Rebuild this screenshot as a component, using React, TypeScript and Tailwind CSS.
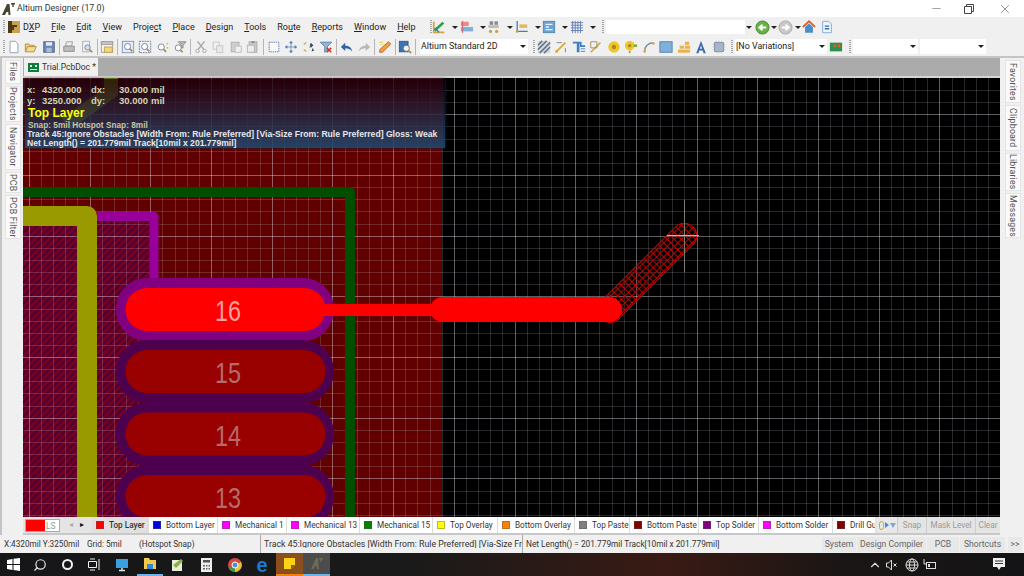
import type { ReactNode } from 'react';
import { ChevronUp, Minus, Search, X } from 'lucide-react';

const icons: Record<string, ReactNode> = {
  new: <path d="M3.5 1.5h6l3 3v10h-9z" fill="#fff" stroke="#8a9bb0" />,
  open: (
    <>
      <path d="M1.5 13.5v-9h4l1 1.5h5v2" fill="#f2d27a" stroke="#b08a3c" />
      <path d="M1.5 13.5l2.5-6h10l-2.5 6z" fill="#f5d98c" stroke="#b08a3c" />
    </>
  ),
  save: (
    <>
      <rect x="2" y="2" width="12" height="12" fill="#6f86b5" stroke="#4c5f8a" />
      <rect x="4.5" y="2.5" width="7" height="4" fill="#e4e9f2" />
      <rect x="5" y="9" width="6" height="5" fill="#aebbd4" />
    </>
  ),
  print: (
    <>
      <path d="M4 7l1-5h7l-1 5z" fill="#eee" stroke="#9a9a9a" />
      <path d="M2 7h12v6H2z" fill="#bcbcbc" stroke="#8c8c8c" />
    </>
  ),
  preview: (
    <>
      <path d="M3 1.5h8v12H3z" fill="#f4f4f4" stroke="#a9a9a9" />
      <circle cx="8.5" cy="8.5" r="3" fill="#cfe0ef" stroke="#6a86a6" />
      <path d="M11 11l3 3" stroke="#a88b55" strokeWidth="2" />
    </>
  ),
  folder: (
    <>
      <rect x="1.5" y="2" width="13" height="12" fill="#f3f3f3" stroke="#9a9a9a" />
      <rect x="1.5" y="2" width="13" height="3" fill="#c9c9c9" stroke="#9a9a9a" />
      <rect x="5" y="8" width="9" height="6" fill="#f4d77c" stroke="#c2a043" />
    </>
  ),
  zoomA: (
    <>
      <rect x="1.5" y="1.5" width="13" height="13" fill="#e4edf6" stroke="#7c93b0" />
      <circle cx="7.5" cy="7.5" r="3.5" fill="#fff" stroke="#5f7ea3" />
      <path d="M10 10l3 3" stroke="#a88b55" strokeWidth="2" />
    </>
  ),
  zoomB: (
    <>
      <rect x="1.5" y="1.5" width="13" height="13" fill="#eef1f5" stroke="#66718a" strokeDasharray="2 1" />
      <circle cx="7.5" cy="7.5" r="3.5" fill="#fff" stroke="#5f7ea3" />
      <path d="M10 10l3 3" stroke="#a88b55" strokeWidth="2" />
    </>
  ),
  zoomC: (
    <>
      <circle cx="6" cy="8" r="3.5" fill="#fff" stroke="#6f8099" />
      <path d="M8.5 10.5l3 3" stroke="#a88b55" strokeWidth="2" />
      <path d="M12 3h2v2h-2zM12 8h2v2h-2z" fill="#d9c24f" />
    </>
  ),
  zoomD: (
    <>
      <path d="M6 2h9l-3.5 4v3h-2V6z" fill="#b9b9b9" stroke="#8a8a8a" />
      <circle cx="6" cy="9" r="3.5" fill="#fff" stroke="#6f8099" />
      <path d="M8.5 11.5l2.5 2.5" stroke="#a88b55" strokeWidth="2" />
    </>
  ),
  cut: (
    <>
      <path d="M4 1.5l7 9M12 1.5l-7 9" stroke="#a5a5a5" strokeWidth="1.5" fill="none" />
      <circle cx="4" cy="12.5" r="2" fill="none" stroke="#a5a5a5" />
      <circle cx="12" cy="12.5" r="2" fill="none" stroke="#a5a5a5" />
    </>
  ),
  copy: (
    <>
      <rect x="2.5" y="2.5" width="7" height="8" fill="#f3f3f3" stroke="#c3c3c3" />
      <rect x="6.5" y="6.5" width="7" height="8" fill="#e9e9e9" stroke="#c3c3c3" />
    </>
  ),
  paste: (
    <>
      <rect x="2.5" y="2.5" width="9" height="11" fill="#cfcfcf" stroke="#adadad" />
      <rect x="7" y="7" width="7" height="7" fill="#f0f0f0" stroke="#bdbdbd" />
    </>
  ),
  paste2: (
    <>
      <rect x="3.5" y="2" width="9" height="12" fill="#c9c9c9" stroke="#a9a9a9" />
      <rect x="1.5" y="6" width="8" height="8" fill="#ececec" stroke="#b3b3b3" />
      <rect x="6" y="1.5" width="4" height="2" fill="#8f8f8f" />
    </>
  ),
  select: <rect x="2.5" y="2.5" width="11" height="11" fill="#fff" fillOpacity=".5" stroke="#4a6aa5" strokeDasharray="1.5 1" />,
  move: <path d="M8 2v12M2 8h12M8 1.5L6.5 3.5h3zM8 14.5l-1.5-2h3zM1.5 8l2-1.5v3zM14.5 8l-2-1.5v3z" stroke="#4f7aae" fill="#4f7aae" strokeWidth=".8" />,
  deselect: (
    <>
      <path d="M2 5l3-2M2 11l3 2M8 8h1" stroke="#c9b557" strokeWidth="1.5" fill="none" />
      <path d="M10 3l3 3-3 3-1-3zM12 9l2 3-3 1z" fill="#3c4a66" />
    </>
  ),
  filter: (
    <>
      <path d="M1.5 2.5h13l-5 5v5l-3 1.5v-6.5z" fill="#8fb5d9" stroke="#597ea3" />
      <path d="M9 9l5 5M14 9l-5 5" stroke="#d0342c" strokeWidth="1.7" />
    </>
  ),
  undo: <path d="M14 13C13 8 10 6.5 6 6.5V3L1 8l5 4.5V9.5c3 0 6 1 8 3.5z" fill="#2f62a6" />,
  redo: <path d="M2 13c1-5 4-6.5 8-6.5V3l5 5-5 4.5V9.5c-3 0-6 1-8 3.5z" fill="#b8b8b8" />,
  pencil: (
    <>
      <path d="M12 2l2.5 2.5L5 14H2v-3z" fill="#f0a13a" stroke="#c9562b" />
      <path d="M1 2h5v1H1zM2 5h6v1H2z" fill="#e6d04a" />
    </>
  ),
  books: (
    <>
      <rect x="1.5" y="1.5" width="10" height="12" fill="#3c74b4" stroke="#2d5a8f" />
      <circle cx="9.5" cy="9.5" r="3.5" fill="#f5f5f5" stroke="#6c6c6c" />
      <path d="M12 12l3 3" stroke="#b08a3c" strokeWidth="2" />
    </>
  ),
  route: (
    <>
      <path d="M2 2v12h12" stroke="#d2a63c" strokeWidth="2" fill="none" />
      <path d="M3 12L13 3" stroke="#2f9b46" strokeWidth="3" />
      <path d="M3 9l5 5" stroke="#2f7bb5" strokeWidth="1.5" />
    </>
  ),
  align: (
    <>
      <rect x="1" y="2" width="9" height="5" fill="#e98a8a" />
      <rect x="1" y="8" width="14" height="5" fill="#7fb1dc" />
      <path d="M3 1v14" stroke="#d05a5a" />
    </>
  ),
  parts: (
    <>
      <rect x="3" y="1.5" width="4" height="4" fill="#8a8a8a" />
      <rect x="8.5" y="1.5" width="4" height="4" fill="#8a8a8a" />
      <rect x="1.5" y="6" width="12" height="3" fill="#b8b8b8" />
      <circle cx="4" cy="13" r="1.8" fill="#c8a13c" />
      <circle cx="11" cy="13" r="1.8" fill="#c8a13c" />
    </>
  ),
  trace: (
    <>
      <path d="M2.5 1v12h12" stroke="#3f7fbf" strokeWidth="1.5" fill="none" />
      <rect x="5" y="5" width="9" height="4" fill="#e3b760" />
      <circle cx="2.5" cy="13" r="1.5" fill="#c8a13c" />
    </>
  ),
  sheet: (
    <>
      <rect x="1.5" y="1.5" width="13" height="13" fill="#6aa2d2" stroke="#4e84b5" />
      <path d="M4 5h8M4 11h8M4 8h4" stroke="#e8f1f8" strokeWidth="1.5" />
    </>
  ),
  grid: <path d="M1 3h14M1 6h14M1 9h14M1 12h14M3 1v14M6 1v14M9 1v14M12 1v14" stroke="#5f7bb3" />,
  back: (
    <>
      <circle cx="8" cy="8" r="7" fill="#6ab04a" stroke="#4d8a33" />
      <path d="M12 8H6M8 5L4.5 8 8 11" stroke="#fff" strokeWidth="2" fill="none" />
    </>
  ),
  forward: (
    <>
      <circle cx="8" cy="8" r="7" fill="#c9c9c9" stroke="#a9a9a9" />
      <path d="M4 8h6M8 5l3.5 3L8 11" stroke="#fff" strokeWidth="2" fill="none" />
    </>
  ),
  home: (
    <>
      <path d="M1 8l7-6.5L15 8" stroke="#d9622b" strokeWidth="2" fill="none" />
      <path d="M3.5 8v6.5h9V8L8 4z" fill="#4a8bc9" />
    </>
  ),
  doc: (
    <>
      <path d="M3 1.5h7l3 3v10H3z" fill="#eef4fb" stroke="#7fa5cf" />
      <path d="M5.5 7h5M5.5 10h5" stroke="#2f6fb5" strokeWidth="1.5" />
    </>
  ),
  hatch: (
    <>
      <rect x="1" y="1" width="14" height="14" fill="#d8d8d8" />
      <path d="M1 6l5-5M1 11L11 1M3 15L15 3M8 15l7-7" stroke="#5f7596" strokeWidth="1.7" />
    </>
  ),
  track1: (
    <>
      <path d="M3 13L13 3" stroke="#d9a93c" strokeWidth="2" />
      <path d="M3 3h6M13 9v5" stroke="#7d7d7d" />
      <rect x="1.5" y="11.5" width="3" height="3" fill="#d9a93c" />
    </>
  ),
  bus: (
    <>
      <path d="M1 3h9v4h5" stroke="#3f7fbf" strokeWidth="2" fill="none" />
      <path d="M7 3v11" stroke="#3f7fbf" strokeWidth="3" />
      <path d="M10 10h5M10 13h5" stroke="#3f7fbf" />
    </>
  ),
  track2: (
    <>
      <path d="M2 14L13 3" stroke="#d9a93c" strokeWidth="2" />
      <path d="M2 2h7v7H2z" stroke="#9a8a55" fill="none" />
    </>
  ),
  pad: (
    <>
      <circle cx="8" cy="8" r="6.5" fill="#eec52b" />
      <circle cx="8" cy="8" r="2.5" fill="#a98a1e" />
    </>
  ),
  via: (
    <>
      <circle cx="6.5" cy="6.5" r="5.5" fill="#eec52b" />
      <circle cx="6.5" cy="6.5" r="2" fill="#a98a1e" />
      <path d="M11 5h4v3h-4z" fill="#7fae3c" />
      <path d="M6.5 12v3" stroke="#c89c1e" strokeWidth="2" />
    </>
  ),
  arc: (
    <>
      <path d="M3 13A9 9 0 0 1 13 3.5" stroke="#7f8da3" strokeWidth="1.5" fill="none" />
      <circle cx="3" cy="13" r="1.5" fill="#d9a93c" />
      <circle cx="13" cy="4" r="1.5" fill="#d9a93c" />
    </>
  ),
  rect: <rect x="1" y="2" width="14" height="12" fill="#7fb1dc" stroke="#4e7ea8" />,
  bricks: (
    <>
      <rect x="9" y="2" width="5" height="3.5" fill="#e8b34a" />
      <rect x="3" y="6.5" width="5" height="3.5" fill="#e8b34a" />
      <rect x="9" y="6.5" width="6" height="3.5" fill="#e8b34a" />
      <rect x="1" y="11" width="14" height="3.5" fill="#e8b34a" />
    </>
  ),
  text: <path d="M8 1L2.5 15h2.500l1-3h4l1 3h2.500zM6.800 10L8 6l1.200 4z" fill="#3c67ad" />,
  chip: (
    <>
      <rect x="3" y="3" width="10" height="10" fill="#a6b6c9" stroke="#75879c" />
      <path d="M5 1v14M8 1v14M11 1v14M1 5h14M1 8h14M1 11h14" stroke="#a9b6c5" strokeDasharray="2 10" />
    </>
  ),
  board: (
    <>
      <rect x="1" y="3" width="14" height="10" fill="#2f8f50" />
      <path d="M5 5l3 3M8 5L5 8M10 5l3 3M13 5l-3 3" stroke="#d9622b" strokeWidth="1.3" />
    </>
  ),
};

function Ic({ name, size = 14 }: { name: string; size?: number }) {
  return (
    <svg width={size} height={size} viewBox="0 0 16 16" className="shrink-0">
      {icons[name]}
    </svg>
  );
}

function Btn({ name }: { name: string }) {
  return (
    <div className="flex h-full w-[17.5px] shrink-0 items-center justify-center">
      <Ic name={name} />
    </div>
  );
}

function Drop() {
  return <div className="h-0 w-0 shrink-0 border-x-[3px] border-t-[3px] border-x-transparent border-t-[#222]" />;
}

function Handle({ className = '' }: { className?: string }) {
  return <div className={`h-[14px] w-[2px] shrink-0 bg-[repeating-linear-gradient(#a5a5a5_0,#a5a5a5_1px,#f0f0f0_1px,#f0f0f0_2px)] ${className}`} />;
}

function Sep() {
  return <div className="mx-[1px] h-[16px] w-[1px] shrink-0 bg-[#b5b5b5]" />;
}

function IconDrop({ name }: { name: string }) {
  return (
    <div className="flex w-[27.5px] shrink-0 items-center gap-[6px]">
      <Ic name={name} />
      <Drop />
    </div>
  );
}

function Combo({ width, text = '' }: { width: string; text?: string }) {
  return (
    <div className={`flex h-[15px] shrink-0 items-center justify-between pr-[2px] ${width} bg-white`}>
      <span className="whitespace-nowrap pl-[1px] text-[8.9px] leading-none text-[#222]">{text}</span>
      <Drop />
    </div>
  );
}

const menus: [string, string, string][] = [
  ['D', 'X', 'P'],
  ['', 'F', 'ile'],
  ['', 'E', 'dit'],
  ['', 'V', 'iew'],
  ['Proje', 'c', 't'],
  ['', 'P', 'lace'],
  ['', 'D', 'esign'],
  ['', 'T', 'ools'],
  ['Ro', 'u', 'te'],
  ['', 'R', 'eports'],
  ['', 'W', 'indow'],
  ['', 'H', 'elp'],
];

const layers: [string, string, string][] = [
  ['Top Layer', '#ff0000', 'w-[56px]'],
  ['Bottom Layer', '#0000e0', 'w-[69px]'],
  ['Mechanical 1', '#ff00ff', 'w-[69px]'],
  ['Mechanical 13', '#ff00ff', 'w-[73px]'],
  ['Mechanical 15', '#008000', 'w-[73px]'],
  ['Top Overlay', '#ffff00', 'w-[65px]'],
  ['Bottom Overlay', '#ff8000', 'w-[77px]'],
  ['Top Paste', '#808080', 'w-[55px]'],
  ['Bottom Paste', '#800000', 'w-[69px]'],
  ['Top Solder', '#800080', 'w-[60px]'],
  ['Bottom Solder', '#ff00ff', 'w-[74px]'],
  ['Drill Guide', '#800000', 'w-[43px]'],
];

function VTab({ label, height }: { label: string; height: string }) {
  return (
    <div className={`flex w-[16px] items-center justify-center border border-[#e4e4e4] bg-[#fafafa] ${height}`}>
      <span className="whitespace-nowrap text-[8.8px] leading-none tracking-[0.2px] text-[#555] [writing-mode:vertical-rl]">{label}</span>
    </div>
  );
}

function PcbCanvas() {
  const vs = Array.from({ length: 81 }, (_, i) => 28.9 + i * 12.14);
  const hs = Array.from({ length: 43 }, (_, i) => 5 + i * 12.14).filter((y) => y > 78);
  const pads = [
    { y: 278, label: '16', ring: '#800080', fill: '#ff0000', text: '#ff9c9c' },
    { y: 340, label: '15', ring: '#4d004d', fill: '#990000', text: '#b86a6a' },
    { y: 402.5, label: '14', ring: '#4d004d', fill: '#990000', text: '#b86a6a' },
    { y: 465, label: '13', ring: '#4d004d', fill: '#990000', text: '#b86a6a' },
  ];
  return (
    <svg viewBox="23 78 977 439" width="977" height="439" className="block">
      <defs>
        <pattern id="hatch" width="5" height="5" patternUnits="userSpaceOnUse" patternTransform="rotate(45)">
          <rect width="5" height="5" fill="#760020" />
          <rect width="2" height="5" fill="#4a0034" />
        </pattern>
        <pattern id="mesh" width="5" height="5" patternUnits="userSpaceOnUse">
          <path d="M0 0.5H5M0.5 0V5" stroke="#c40000" />
        </pattern>
      </defs>
      <rect x="23" y="78" width="977" height="439" fill="#000" />
      <rect x="23" y="78" width="419" height="439" fill="#600000" />
      <rect x="23" y="222" width="127" height="295" fill="url(#hatch)" />
      <rect x="138" y="340" width="200" height="177" fill="#600000" />
      {vs.map((x, i) => (
        <line key={x} x1={Math.round(x) + 0.5} x2={Math.round(x) + 0.5} y1="78" y2="517" stroke="#e8e8f4" strokeOpacity={i % 5 === 0 ? 0.4 : 0.17} />
      ))}
      {hs.map((y) => (
        <line key={y} y1={Math.round(y) + 0.5} y2={Math.round(y) + 0.5} x1="23" x2="1000" stroke="#e8e8f4" strokeOpacity={Math.round((y - 114.3) / 12.14) % 5 === 0 ? 0.4 : 0.17} />
      ))}
      <path d="M111 78V92L66 124" stroke="#999900" strokeWidth="14" fill="none" />
      <path d="M23 192H350V517" stroke="#004f00" strokeWidth="10" fill="none" strokeLinejoin="round" />
      <path d="M23 216H87V517" stroke="#999900" strokeWidth="20" fill="none" strokeLinejoin="round" />
      <path d="M97 216.5H154V285" stroke="#990099" strokeWidth="9" fill="none" strokeLinejoin="round" />
      {pads.map((p) => (
        <rect key={p.label} x="116" y={p.y} width="218" height="63" rx="31" fill={p.ring} />
      ))}
      {pads.map((p) => (
        <g key={p.label}>
          <rect x="125.5" y={p.y + 10} width="200" height="43" rx="21.5" fill={p.fill} />
          <text x="215" y={p.y + 43} fontSize="30" fontFamily="Liberation Sans" fill={p.text} textLength="26" lengthAdjust="spacingAndGlyphs">
            {p.label}
          </text>
        </g>
      ))}
      <rect x="322" y="304" width="120" height="12" fill="#ff0000" />
      <rect x="597.5" y="297.5" width="130" height="25" rx="12.5" fill="url(#mesh)" stroke="#c80000" transform="rotate(-45 610 310)" />
      <rect x="430" y="297" width="192" height="25" rx="12.5" fill="#ff0000" />
      <path d="M684.5 200V272" stroke="#7c7c72" />
      <path d="M667 235.5H699" stroke="#b8b8b8" />
    </svg>
  );
}

function Readout() {
  return (
    <div className="absolute left-[2px] top-[1px] flex h-[69px] w-[420px] flex-col bg-gradient-to-b from-[#14000ac8] to-[#1d4a70e0] pl-[2px] pt-[5px] font-['Liberation_Sans',sans-serif] font-bold shadow-[0_0_3px_#0f2c45]">
      <div className="grid grid-cols-[15px_49px_27px_33px_auto] text-[9.5px] leading-[11px] text-[#d5d5ae]">
        <span>x:</span>
        <span>4320.000</span>
        <span>dx:</span>
        <span className="pr-[3px] text-right">30.000</span>
        <span>mil</span>
        <span>y:</span>
        <span>3250.000</span>
        <span>dy:</span>
        <span className="pr-[3px] text-right">30.000</span>
        <span>mil</span>
      </div>
      <div className="ml-[1px] text-[12px] leading-[14px] text-[#ffff00]">Top Layer</div>
      <div className="ml-[1px] pt-[1px] text-[8.3px] leading-[9px] text-[#c6c6a4]">Snap: 5mil Hotspot Snap: 8mil</div>
      <div className="whitespace-nowrap text-[8.6px] leading-[9px] text-[#e8e8e8]">
        Track 45:Ignore Obstacles [Width From: Rule Preferred] [Via-Size From: Rule Preferred] Gloss: Weak
      </div>
      <div className="whitespace-nowrap text-[8.6px] leading-[9px] text-[#e8e8e8]">Net Length() = 201.779mil Track[10mil x 201.779mil]</div>
    </div>
  );
}

function Taskbar() {
  return (
    <div className="flex h-[23px] shrink-0 items-center bg-[linear-gradient(90deg,#161618_0%,#1a1a1a_40%,#3a1a14_65%,#1a1615_82%,#141416_100%)]">
      <div className="flex w-[27px] justify-center">
        <svg width="13" height="13" viewBox="0 0 13 13">
          <path d="M0 2l5.5-1v5H0zM6.5 .8L13 0v6H6.5zM0 7h5.5v5L0 11zM6.5 7H13v6l-6.5-.9z" fill="#fff" />
        </svg>
      </div>
      <div className="flex w-[26px] justify-center">
        <Search size={14} color="#e8e8e8" className="-scale-x-100" />
      </div>
      <div className="flex w-[28px] justify-center">
        <div className="h-[11px] w-[11px] rounded-full border-[2px] border-[#f0f0f0]" />
      </div>
      <div className="flex w-[26px] justify-center">
        <svg width="13" height="13" viewBox="0 0 13 13">
          <path d="M.5 3.5h8v6h-8zM2 1h5M2 12h5M11 1v11" stroke="#eee" fill="none" />
        </svg>
      </div>
      <div className="flex h-full w-[30px] items-center justify-center">
        <svg width="14" height="14" viewBox="0 0 14 14">
          <rect x="1" y="1" width="12" height="9" fill="#38a0e0" />
          <path d="M4 12.5h6M7 10v2" stroke="#d8e8f0" strokeWidth="1.5" />
        </svg>
      </div>
      <div className="flex h-full w-[26px] items-center justify-center border-b-[2px] border-[#6db3e8]">
        <svg width="14" height="13" viewBox="0 0 14 13">
          <path d="M1 1h5l1 2h6v9H1z" fill="#f4c84a" />
          <rect x="4" y="7" width="6" height="5" fill="#2f8ad0" />
        </svg>
      </div>
      <div className="flex w-[28px] justify-center">
        <svg width="14" height="14" viewBox="0 0 14 14">
          <rect x="2" y="2" width="10" height="11" fill="#e8edd8" />
          <path d="M3 7l8-6 2 2-7 7z" fill="#8eb04c" />
        </svg>
      </div>
      <div className="flex w-[30px] justify-center">
        <svg width="11" height="14" viewBox="0 0 11 14">
          <rect width="11" height="14" fill="#ededed" />
          <rect x="2" y="2" width="7" height="2.5" fill="#555" />
          <path d="M2 7h2v1.5H2zM5 7h1.5v1.5H5zM7.5 7H9v1.5H7.5zM2 10h2v1.5H2zM5 10h1.5v1.5H5zM7.5 10H9v1.5H7.5z" fill="#666" />
        </svg>
      </div>
      <div className="flex w-[27px] justify-center">
        <svg width="14" height="14" viewBox="0 0 14 14">
          <circle cx="7" cy="7" r="7" fill="#d8483a" />
          <path d="M7 7L1 11a7 7 0 0 0 6 3z" fill="#3a9b4a" />
          <path d="M7 7l6-3a7 7 0 0 1-6 10z" fill="#e9c23a" />
          <circle cx="7" cy="7" r="3" fill="#4a8ee0" stroke="#fff" />
        </svg>
      </div>
      <div className="flex w-[28px] justify-center">
        <span className="font-['Liberation_Sans',sans-serif] text-[20px] font-bold leading-[20px] text-[#1a78d4]">e</span>
      </div>
      <div className="flex h-full w-[27px] items-center justify-center border-b-[2px] border-[#f08010] bg-[#8a4f1c]">
        <svg width="11" height="11" viewBox="0 0 11 11">
          <path d="M0 0h11v7l-4 4H0z" fill="#fcd116" />
          <path d="M7 7h4l-4 4z" fill="#7a6210" />
        </svg>
      </div>
      <div className="flex h-full w-[27px] items-center justify-center border-b-[2px] border-[#6db3e8] bg-[#4c4c4c]">
        <svg width="12" height="11" viewBox="0 0 12 11">
          <path d="M0 11L5 0h2l1 11H6l-.3-3H4l-1.3 3zM8 0h4v1.5h-1.3V4H9.3V1.5H8z" fill="#6f6a50" />
        </svg>
      </div>
      <div className="ml-auto flex items-center">
        <ChevronUp size={14} color="#ddd" className="mr-[4px]" />
        <svg width="12" height="12" viewBox="0 0 12 12" className="mr-[7px]">
          <path d="M.5 4h2l3-3v10l-3-3h-2zM7.5 4.5l3 3M10.5 4.5l-3 3" stroke="#ddd" fill="none" />
        </svg>
        <svg width="14" height="14" viewBox="0 0 14 14" className="mr-[4px]">
          <circle cx="7" cy="7" r="6" stroke="#ddd" fill="none" />
          <ellipse cx="7" cy="7" rx="2.5" ry="6" stroke="#ddd" fill="none" />
          <path d="M1 7h12M2 4h10M2 10h10" stroke="#ddd" />
        </svg>
        <svg width="13" height="11" viewBox="0 0 13 11" className="mr-[57px]">
          <rect x="3.5" y="3.5" width="9" height="6" stroke="#ddd" fill="none" />
          <path d="M1 0v5h2" stroke="#ddd" fill="none" />
          <rect x="5" y="5" width="2" height="3" fill="#ddd" />
        </svg>
        <svg width="12" height="13" viewBox="0 0 12 13" className="mr-[19px]">
          <path d="M0 0h12v9H8l-2 3-2-3H0z" fill="#f0f0f0" />
          <path d="M2 3h8M2 5.5h8" stroke="#333" />
        </svg>
      </div>
    </div>
  );
}

export default function App() {
  return (
    <div className="flex h-[576px] w-[1024px] flex-col overflow-hidden bg-[#f0f0f0] font-['Roboto',sans-serif] text-[#222]">
      {/* Title bar */}
      <div className="flex h-[17px] shrink-0 items-center bg-white">
        <svg width="13" height="12" viewBox="0 0 13 12" className="ml-[2px]">
          <path d="M0 12L5 1h2.5L8.5 12H6.5L6.2 9H4.5L3 12zM9 0h4v1.5h-1.3V4H10.3V1.5H9z" fill="#4a4530" />
        </svg>
        <span className="ml-[2px] text-[8.8px] leading-none text-[#333]">Altium Designer (17.0)</span>
        <div className="ml-auto flex items-center">
          <Minus size={13} color="#555" strokeWidth={1} className="mr-[21px]" />
          <svg width="10" height="10" viewBox="0 0 10 10" className="mr-[24px]">
            <path d="M.5 2.5h7v7h-7zM2.5 2.5v-2h7v7h-2" stroke="#444" fill="none" />
          </svg>
          <X size={14} color="#444" strokeWidth={1} className="mr-[12px]" />
        </div>
      </div>

      {/* Menu row */}
      <div className="flex h-[20px] shrink-0 items-center">
        <Handle className="ml-[3px]" />
        <svg width="12" height="12" viewBox="0 0 12 12" className="ml-[3px]">
          <rect width="12" height="12" fill="#c8a14a" />
          <rect width="4" height="12" fill="#4a3a1c" />
          <path d="M4 4h5v2H6v3H4z" fill="#4a3a1c" />
        </svg>
        <div className="ml-[3px] flex w-[405px] shrink-0 items-center gap-[11px] text-[9px] leading-none">
          {menus.map(([a, b, c]) => (
            <span key={a + b + c}>
              {a}
              <span className="underline">{b}</span>
              {c}
            </span>
          ))}
        </div>
        <Handle className="ml-[2px]" />
        <div className="flex items-center">
          {['route', 'align', 'parts', 'trace', 'sheet', 'grid'].map((n) => (
            <IconDrop key={n} name={n} />
          ))}
        </div>
        <Handle className="ml-[5px]" />
        <div className="ml-[2px] flex h-[14px] w-[139px] shrink-0 bg-white" />
        <div className="ml-[1px]">
          <Drop />
        </div>
        <div className="ml-[3px]">
          <Ic name="back" size={15} />
        </div>
        <div className="ml-[1px]">
          <Drop />
        </div>
        <div className="ml-[1px]">
          <Ic name="forward" size={15} />
        </div>
        <div className="ml-[1.5px]">
          <Drop />
        </div>
        <Btn name="home" />
        <Btn name="doc" />
      </div>

      {/* Toolbar row */}
      <div className="flex h-[19px] shrink-0 items-center">
        <Handle className="ml-[3px]" />
        <Btn name="new" />
        <Btn name="open" />
        <Btn name="save" />
        <Sep />
        <Btn name="print" />
        <Btn name="preview" />
        <Sep />
        <Btn name="folder" />
        <Sep />
        <Btn name="zoomA" />
        <Btn name="zoomB" />
        <Btn name="zoomC" />
        <Btn name="zoomD" />
        <Sep />
        <Btn name="cut" />
        <Btn name="copy" />
        <Btn name="paste" />
        <Btn name="paste2" />
        <Sep />
        <Btn name="select" />
        <Btn name="move" />
        <Btn name="deselect" />
        <Btn name="filter" />
        <Sep />
        <Btn name="undo" />
        <Btn name="redo" />
        <Sep />
        <Btn name="pencil" />
        <Sep />
        <Btn name="books" />
        <Sep />
        <div className="ml-[3px]">
          <Combo width="w-[108px]" text="Altium Standard 2D" />
        </div>
        <Handle className="ml-[5px]" />
        {['hatch', 'track1', 'bus', 'track2', 'pad', 'via', 'arc', 'rect', 'bricks', 'text', 'chip'].map((n) => (
          <Btn key={n} name={n} />
        ))}
        <Handle className="ml-[3.5px]" />
        <div className="ml-[2px]">
          <Combo width="w-[92px]" text="[No Variations]" />
        </div>
        <Btn name="board" />
        <Handle className="ml-[4.5px]" />
        <div className="ml-[2px]">
          <Combo width="w-[65px]" />
        </div>
        <div className="ml-[2px]">
          <Combo width="w-[66px]" />
        </div>
      </div>

      {/* Workspace */}
      <div className="flex min-h-0 flex-1 border-t-[2px] border-[#c4c4c4]">
        <div className="flex w-[23px] shrink-0 flex-col items-center gap-[2px] border-l-[2px] border-[#c4c4c4] pl-[1px] pt-[2px]">
          <VTab label="Files" height="h-[24px]" />
          <VTab label="Projects" height="h-[36px]" />
          <VTab label="Navigator" height="h-[46px]" />
          <VTab label="PCB" height="h-[21px]" />
          <VTab label="PCB Filter" height="h-[44px]" />
        </div>

        <div className="flex min-w-0 flex-1 flex-col">
          <div className="flex h-[18px] shrink-0 items-end bg-[#ababab] pl-[1px]">
            <div className="flex h-[18px] w-[74px] items-center gap-[3px] whitespace-nowrap bg-[#f0f0f0] pl-[4px]">
              <svg width="11" height="9" viewBox="0 0 11 9" className="shrink-0">
                <rect width="11" height="9" fill="#0f7a3c" />
                <path d="M2 2h2v2H2zM7 2h2v2H7zM2 6h7v1H2z" fill="#e8f0e0" />
              </svg>
              <span className="text-[8.5px] leading-none text-[#333]">Trial.PcbDoc *</span>
            </div>
          </div>
          <div className="h-[2px] shrink-0 bg-[#d4d4d4]" />
          <div className="relative h-[439px] shrink-0">
            <PcbCanvas />
            <Readout />
          </div>
          {/* Layer tabs */}
          <div className="flex h-[16px] shrink-0 items-center bg-[#e4e4e4] text-[8.2px] leading-none text-[#333]">
            <div className="ml-[2px] flex h-[13px] w-[35px] shrink-0 border border-[#aaa] bg-white">
              <div className="w-[19px] bg-[#ff0000]" />
              <span className="pl-[1px] pt-[1px] text-[8.5px] leading-[10px] text-[#999]">LS</span>
            </div>
            <div className="flex w-[32px] shrink-0 justify-center gap-[7px]">
              <span className="text-[8px] text-[#aaa]">◂</span>
              <span className="text-[8px] text-[#111]">▸</span>
            </div>
            <div className="flex h-full w-[785px] min-w-0 shrink-0 overflow-hidden">
              {layers.map(([name, color, width], i) => (
                <div key={name} className={`flex h-full shrink-0 items-center gap-[5px] overflow-hidden whitespace-nowrap pl-[4px] ${width} ${i === 0 ? 'bg-[#e0e0e0] font-medium' : 'border-l border-[#ddd] bg-white'}`}>
                  <div className="h-[8px] w-[8px] shrink-0 border border-[#555]/40" style={{ backgroundColor: color }} />
                  <span>{name}</span>
                </div>
              ))}
            </div>
            <div className="flex h-full w-[20px] shrink-0 items-center justify-center gap-[1px] bg-[#e8e8e8]">
              <div className="h-[9px] w-[5px] rounded-full border border-[#c9a93a]" />
              <div className="h-0 w-0 border-y-[3px] border-l-[4px] border-y-transparent border-l-[#3f8fd8]" />
              <div className="h-0 w-0 border-x-[3px] border-t-[5px] border-x-transparent border-t-[#7fa8d0]" />
            </div>
            <div className="flex h-full min-w-0 flex-1 items-center whitespace-nowrap bg-[#e4e4e4] text-[#9a9a9a]">
              <span className="flex h-full w-[29px] items-center justify-center border-l border-[#ccc]">Snap</span>
              <span className="flex h-full w-[49px] items-center justify-center border-l border-[#ccc]">Mask Level</span>
              <span className="flex h-full w-[25px] items-center justify-center border-l border-[#ccc]">Clear</span>
            </div>
          </div>
          <div className="h-[2px] shrink-0 bg-[#c8c8c8]" />
        </div>

        <div className="flex w-[24px] shrink-0 flex-col items-center gap-[2px] pl-[2px] pt-[2px]">
          <VTab label="Favorites" height="h-[43px]" />
          <VTab label="Clipboard" height="h-[46px]" />
          <VTab label="Libraries" height="h-[38px]" />
          <VTab label="Messages" height="h-[45px]" />
        </div>
      </div>

      {/* Status bar */}
      <div className="flex h-[18px] shrink-0 items-center text-[8.2px] leading-none text-[#333]">
        <span className="ml-[4px] w-[83px] shrink-0 whitespace-nowrap">X:4320mil Y:3250mil</span>
        <span className="w-[52px] shrink-0">Grid: 5mil</span>
        <span className="w-[121px] shrink-0">(Hotspot Snap)</span>
        <div className="h-full w-[1px] shrink-0 bg-[#aaa]" />
        <span className="ml-[3px] w-[258px] shrink-0 overflow-hidden whitespace-nowrap text-[8.75px]">Track 45:Ignore Obstacles [Width From: Rule Preferred] [Via-Size From: Rule Preferred]</span>
        <div className="h-full w-[1px] shrink-0 bg-[#aaa]" />
        <span className="ml-[3px] whitespace-nowrap text-[8.3px]">Net Length() = 201.779mil Track[10mil x 201.779mil]</span>
        <div className="ml-auto flex h-[15px] items-center gap-[1px] whitespace-nowrap pr-[2px] text-[8.6px] text-[#666]">
          <span className="flex h-full w-[34px] items-center justify-center bg-[#e8e8e8]">System</span>
          <span className="flex h-full w-[69px] items-center justify-center bg-[#e8e8e8]">Design Compiler</span>
          <span className="flex h-full w-[32px] items-center justify-center bg-[#e8e8e8]">PCB</span>
          <span className="flex h-full w-[45px] items-center justify-center bg-[#e8e8e8]">Shortcuts</span>
          <span className="ml-[2px] flex h-full w-[14px] items-center justify-center bg-[#e8e8e8]">&gt;&gt;</span>
        </div>
      </div>

      <Taskbar />
    </div>
  );
}
